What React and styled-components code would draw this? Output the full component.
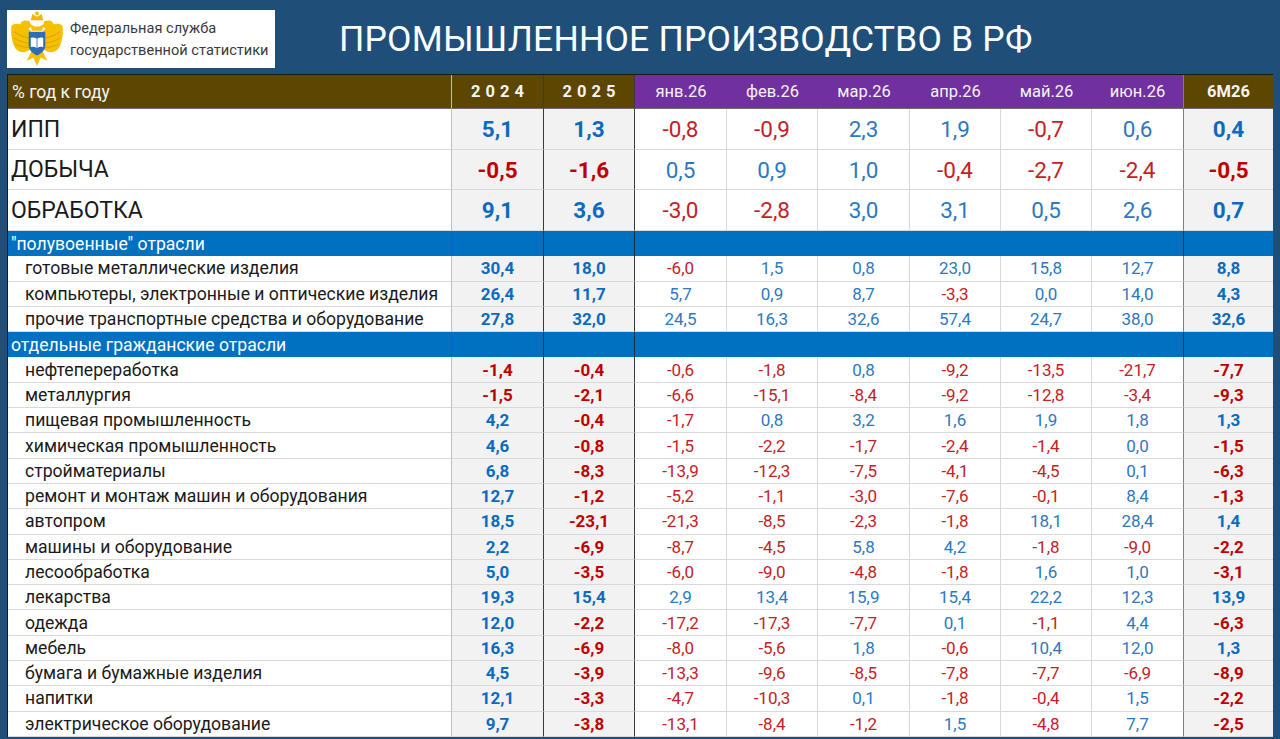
import React from "react";
import styled, { createGlobalStyle } from "styled-components";

const GlobalStyle = createGlobalStyle`
  html, body {
    margin: 0;
    padding: 0;
  }
  body {
    background: #1f4e79;
    font-family: Roboto, "Open Sans", sans-serif;
  }
`;

const COLS = "444px 92px 91px 92px 91px 92px 91px 91px 92px 89px";

const Page = styled.div`
  width: 1280px;
  height: 739px;
  box-sizing: border-box;
  padding: 0 7px 2px 7px;
  background: #1f4e79;
  overflow: hidden;
`;

const Header = styled.div`
  display: flex;
  align-items: flex-start;
  height: 74px;
  padding-top: 10px;
  box-sizing: border-box;
`;

const LogoBox = styled.div`
  display: flex;
  align-items: center;
  gap: 6px;
  width: 268px;
  height: 58px;
  padding-left: 3px;
  box-sizing: border-box;
  background: #fff;
`;

const LogoText = styled.div`
  font-size: 14.6px;
  line-height: 22px;
  color: #3a3a3a;
  white-space: nowrap;
`;

const Title = styled.h1`
  margin: 0 0 0 64px;
  height: 58px;
  line-height: 58px;
  font-size: 35.5px;
  font-weight: 400;
  color: #fff;
  letter-spacing: 0.2px;
  white-space: nowrap;
`;

const Table = styled.div`
  background: #fff;
  border-top: 1px solid #1a1a1a;
  border-left: 1px solid #1a1a1a;
  overflow: hidden;
`;

const Row = styled.div`
  display: grid;
  grid-template-columns: ${COLS};
  height: ${(p) => p.$h}px;
  box-sizing: border-box;
`;

const rightBorder = (i) => {
  if (i === 0) return "1px solid #bfbfbf";
  if (i === 1 || i === 2) return "1px solid #3a3a3a";
  if (i === 8) return "1px solid #7f7f7f";
  if (i === 9) return "none";
  return "1px solid #d9d9d9";
};

const HeadCell = styled.div`
  display: flex;
  align-items: center;
  justify-content: ${(p) => (p.$i === 0 ? "flex-start" : "center")};
  padding-left: ${(p) => (p.$i === 0 ? "4px" : "0")};
  box-sizing: border-box;
  background: ${(p) => (p.$i >= 3 && p.$i <= 8 ? "#7030a0" : "#5c4602")};
  border-right: ${(p) =>
    p.$i >= 3 && p.$i <= 7 ? "none" : rightBorder(p.$i)};
  border-bottom: 1px solid #6d6d6d;
  color: #f4f4f4;
  font-size: ${(p) => (p.$i === 0 ? "17.5px" : "16.5px")};
  font-weight: ${(p) => (p.$i === 1 || p.$i === 2 || p.$i === 9 ? 700 : 400)};
  letter-spacing: ${(p) => (p.$i === 1 || p.$i === 2 ? "5px" : "0")};
  text-indent: ${(p) => (p.$i === 1 || p.$i === 2 ? "5px" : "0")};
`;

const LabelCell = styled.div`
  display: flex;
  align-items: center;
  padding-left: ${(p) => (p.$big ? "3px" : "17px")};
  box-sizing: border-box;
  border-right: ${rightBorder(0)};
  border-bottom: 1px solid #d9d9d9;
  color: #1a1a1a;
  font-size: ${(p) => (p.$big ? "23px" : "17.6px")};
  white-space: nowrap;
`;

const NumCell = styled.div`
  display: flex;
  align-items: center;
  justify-content: center;
  box-sizing: border-box;
  background: ${(p) => (p.$bold ? "#f2f2f2" : "#fff")};
  border-right: ${(p) => rightBorder(p.$i)};
  border-bottom: 1px solid #d9d9d9;
  color: ${(p) =>
    p.$neg ? (p.$bold ? "#c00000" : "#c42127") : p.$bold ? "#0b6bc0" : "#2e78bf"};
  font-size: ${(p) => (p.$big ? "22.5px" : "17px")};
  font-weight: ${(p) => (p.$bold ? 700 : 400)};
`;

const SectionCell = styled.div`
  display: flex;
  align-items: center;
  padding-left: ${(p) => (p.$i === 0 ? "3px" : "0")};
  box-sizing: border-box;
  background: #0070c0;
  border-right: ${(p) =>
    p.$i === 0
      ? "1px solid #2a5f8f"
      : p.$i >= 3 && p.$i <= 7
      ? "none"
      : p.$i === 9
      ? "none"
      : "1px solid #1c2f45"};
  color: #fff;
  font-size: 17.6px;
  white-space: nowrap;
`;

const header = [
  "% год к году",
  "2024",
  "2025",
  "янв.26",
  "фев.26",
  "мар.26",
  "апр.26",
  "май.26",
  "июн.26",
  "6М26",
];

const bigRows = [
  ["ИПП", "5,1", "1,3", "-0,8", "-0,9", "2,3", "1,9", "-0,7", "0,6", "0,4"],
  ["ДОБЫЧА", "-0,5", "-1,6", "0,5", "0,9", "1,0", "-0,4", "-2,7", "-2,4", "-0,5"],
  ["ОБРАБОТКА", "9,1", "3,6", "-3,0", "-2,8", "3,0", "3,1", "0,5", "2,6", "0,7"],
];

const sections = [
  {
    title: "\"полувоенные\" отрасли",
    rows: [
      ["готовые металлические изделия", "30,4", "18,0", "-6,0", "1,5", "0,8", "23,0", "15,8", "12,7", "8,8"],
      ["компьютеры, электронные и оптические изделия", "26,4", "11,7", "5,7", "0,9", "8,7", "-3,3", "0,0", "14,0", "4,3"],
      ["прочие транспортные средства и оборудование", "27,8", "32,0", "24,5", "16,3", "32,6", "57,4", "24,7", "38,0", "32,6"],
    ],
  },
  {
    title: "отдельные гражданские отрасли",
    rows: [
      ["нефтепереработка", "-1,4", "-0,4", "-0,6", "-1,8", "0,8", "-9,2", "-13,5", "-21,7", "-7,7"],
      ["металлургия", "-1,5", "-2,1", "-6,6", "-15,1", "-8,4", "-9,2", "-12,8", "-3,4", "-9,3"],
      ["пищевая промышленность", "4,2", "-0,4", "-1,7", "0,8", "3,2", "1,6", "1,9", "1,8", "1,3"],
      ["химическая промышленность", "4,6", "-0,8", "-1,5", "-2,2", "-1,7", "-2,4", "-1,4", "0,0", "-1,5"],
      ["стройматериалы", "6,8", "-8,3", "-13,9", "-12,3", "-7,5", "-4,1", "-4,5", "0,1", "-6,3"],
      ["ремонт и монтаж машин и оборудования", "12,7", "-1,2", "-5,2", "-1,1", "-3,0", "-7,6", "-0,1", "8,4", "-1,3"],
      ["автопром", "18,5", "-23,1", "-21,3", "-8,5", "-2,3", "-1,8", "18,1", "28,4", "1,4"],
      ["машины и оборудование", "2,2", "-6,9", "-8,7", "-4,5", "5,8", "4,2", "-1,8", "-9,0", "-2,2"],
      ["лесообработка", "5,0", "-3,5", "-6,0", "-9,0", "-4,8", "-1,8", "1,6", "1,0", "-3,1"],
      ["лекарства", "19,3", "15,4", "2,9", "13,4", "15,9", "15,4", "22,2", "12,3", "13,9"],
      ["одежда", "12,0", "-2,2", "-17,2", "-17,3", "-7,7", "0,1", "-1,1", "4,4", "-6,3"],
      ["мебель", "16,3", "-6,9", "-8,0", "-5,6", "1,8", "-0,6", "10,4", "12,0", "1,3"],
      ["бумага и бумажные изделия", "4,5", "-3,9", "-13,3", "-9,6", "-8,5", "-7,8", "-7,7", "-6,9", "-8,9"],
      ["напитки", "12,1", "-3,3", "-4,7", "-10,3", "0,1", "-1,8", "-0,4", "1,5", "-2,2"],
      ["электрическое оборудование", "9,7", "-3,8", "-13,1", "-8,4", "-1,2", "1,5", "-4,8", "7,7", "-2,5"],
    ],
  },
];

const RosstatEmblem = () => (
  <svg width="54" height="56" viewBox="0 0 52 54">
    {/* crown */}
    <path d="M20 9 L21.5 3 L26 5.5 L30.5 3 L32 9 Z" fill="#f2b705" />
    <circle cx="26" cy="2.2" r="1.8" fill="#f2b705" />
    {/* heads */}
    <path d="M19 10 C14 8 10 10 10 13.5 L7 15 L11.5 16.5 C14 19 18 18 20.5 15 Z" fill="#f5c000" />
    <path d="M33 10 C38 8 42 10 42 13.5 L45 15 L40.5 16.5 C38 19 34 18 31.5 15 Z" fill="#f5c000" />
    <path d="M19.5 12 C22 16 30 16 32.5 12 L31 19 L21 19 Z" fill="#f5c000" />
    {/* wings */}
    <path d="M20 19 C13 13 6 10 1.5 14 C0.5 21 1.5 30 5 36 C9 41 15 41 19.5 37 Z" fill="#f5c000" />
    <path d="M32 19 C39 13 46 10 50.5 14 C51.5 21 50.5 30 47 36 C43 41 37 41 32.5 37 Z" fill="#f5c000" />
    <path d="M4 20 C8 23 13 25 18 26 M3.5 26 C8 29 13 30 18 31 M5 32 C9 34 13 35 18 35" stroke="#d99e00" strokeWidth="0.9" fill="none" />
    <path d="M48 20 C44 23 39 25 34 26 M48.5 26 C44 29 39 30 34 31 M47 32 C43 34 39 35 34 35" stroke="#d99e00" strokeWidth="0.9" fill="none" />
    {/* tail and legs */}
    <path d="M21 38 L16 48 L22.5 45 L26 53 L29.5 45 L36 48 L31 38 Z" fill="#f5c000" />
    {/* shield */}
    <path d="M18 20 L34 20 L34 33 C34 38 30 41 26 43 C22 41 18 38 18 33 Z" fill="#2b6db8" />
    <path d="M20 26 C23 25 25 26 26 27 C27 26 29 25 32 26 L32 35 C29 34 27 35 26 36 C25 35 23 34 20 35 Z" fill="#ffffff" />
    <path d="M26 27 L26 36" stroke="#2b6db8" strokeWidth="0.8" />
  </svg>
);

const isNeg = (v) => v.startsWith("-");

const DataRow = ({ cells, h, big }) => (
  <Row $h={h}>
    <LabelCell $big={big}>{cells[0]}</LabelCell>
    {cells.slice(1).map((v, k) => {
      const i = k + 1;
      const bold = i === 1 || i === 2 || i === 9;
      return (
        <NumCell key={i} $i={i} $bold={bold} $big={big} $neg={isNeg(v)}>
          {v}
        </NumCell>
      );
    })}
  </Row>
);

const SectionRow = ({ title }) => (
  <Row $h={25.3}>
    {header.map((_, i) => (
      <SectionCell key={i} $i={i}>
        {i === 0 ? title : null}
      </SectionCell>
    ))}
  </Row>
);

export default function App() {
  return (
    <Page>
      <GlobalStyle />
      <Header>
        <LogoBox>
          <RosstatEmblem />
          <LogoText>
            Федеральная служба
            <br />
            государственной статистики
          </LogoText>
        </LogoBox>
        <Title>ПРОМЫШЛЕННОЕ ПРОИЗВОДСТВО В РФ</Title>
      </Header>
      <Table>
        <Row $h={34}>
          {header.map((t, i) => (
            <HeadCell key={i} $i={i}>
              {t}
            </HeadCell>
          ))}
        </Row>
        {bigRows.map((r, k) => (
          <DataRow key={r[0]} cells={r} h={k === 1 ? 40 : 41} big />
        ))}
        {sections.map((s) => (
          <React.Fragment key={s.title}>
            <SectionRow title={s.title} />
            {s.rows.map((r) => (
              <DataRow key={r[0]} cells={r} h={25.3} />
            ))}
          </React.Fragment>
        ))}
      </Table>
    </Page>
  );
}
